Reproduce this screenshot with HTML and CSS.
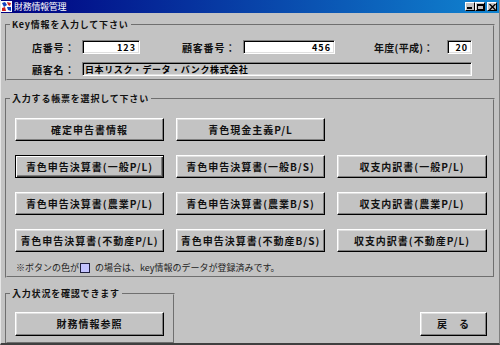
FILE: index.html
```html
<!DOCTYPE html>
<html lang="ja">
<head>
  <meta charset="UTF-8" />
  <title>財務情報管理</title>
  <link rel="stylesheet" href="styles.css">
</head>
<body>

<div class="window">
  <div class="titlebar">
    <svg class="app-icon" width="11" height="11" viewBox="0 0 11 11">
      <rect x="0" y="0" width="11" height="11" fill="#ffffff"/>
      <path d="M1 2 L4 1 L6 4 L3 6 Z" fill="#1040c0"/>
      <path d="M6 1 L10 2 L9 5 L7 4 Z" fill="#d02020"/>
      <path d="M1 7 L4 6 L5 10 L1 10 Z" fill="#d02020"/>
      <path d="M6 6 L10 6 L10 10 L7 9 Z" fill="#1040c0"/>
    </svg>
    <span class="title">財務情報管理</span>
    <div class="caption-buttons">
      <span class="cap-btn">
        <svg width="6" height="5" viewBox="0 0 6 5"><rect x="0" y="3" width="5" height="2" fill="#000"/></svg>
      </span>
      <span class="cap-btn">
        <svg width="7" height="6" viewBox="0 0 7 6"><rect x="0.5" y="0.5" width="6" height="5" fill="none" stroke="#000"/><rect x="0" y="0" width="7" height="2" fill="#000"/></svg>
      </span>
      <span class="cap-btn cap-close">
        <svg width="7" height="6" viewBox="0 0 7 6"><path d="M0.5 0 L6.5 6 M6.5 0 L0.5 6" stroke="#000" stroke-width="1.4"/></svg>
      </span>
    </div>
  </div>

  <div class="client">
    <fieldset class="group group-key">
      <legend>Key情報を入力して下さい</legend>
      <div class="key-row">
        <label class="lbl lbl-1">店番号：</label>
        <input class="field num w-shop" type="text" value="123" readonly>
        <label class="lbl lbl-2">顧客番号：</label>
        <input class="field num w-cust" type="text" value="456" readonly>
        <label class="lbl lbl-3">年度(平成)：</label>
        <input class="field num w-year" type="text" value="20" readonly>
      </div>
      <div class="key-row">
        <label class="lbl lbl-1">顧客名：</label>
        <input class="field name w-name" type="text" value="日本リスク・データ・バンク株式会社" disabled>
      </div>
    </fieldset>

    <fieldset class="group group-forms">
      <legend>入力する帳票を選択して下さい</legend>
      <div class="form-grid">
        <button class="btn">確定申告書情報</button>
        <button class="btn">青色現金主義P/L</button>
        <span></span>
        <button class="btn btn-default">青色申告決算書(一般P/L)</button>
        <button class="btn">青色申告決算書(一般B/S)</button>
        <button class="btn">収支内訳書(一般P/L)</button>
        <button class="btn">青色申告決算書(農業P/L)</button>
        <button class="btn">青色申告決算書(農業B/S)</button>
        <button class="btn">収支内訳書(農業P/L)</button>
        <button class="btn">青色申告決算書(不動産P/L)</button>
        <button class="btn">青色申告決算書(不動産B/S)</button>
        <button class="btn">収支内訳書(不動産P/L)</button>
      </div>
      <p class="note">※ボタンの色が<span class="swatch"></span> の場合は、key情報のデータが登録済みです。</p>
    </fieldset>

    <div class="bottom-row">
      <fieldset class="group group-status">
        <legend>入力状況を確認できます</legend>
        <button class="btn btn-wide">財務情報参照</button>
      </fieldset>
      <button class="btn btn-back">戻　る</button>
    </div>
  </div>
</div>

</body>
</html>
```

FILE: styles.css
```css
* {
  box-sizing: border-box;
}

body {
  margin: 0;
  background-color: #c3c3c3;
  color: #111;
  font-family: "Noto Sans CJK JP", "Noto Sans", sans-serif;
}

.window {
  width: 500px;
  height: 345px;
  background-color: #c3c3c3;
  display: flex;
  flex-direction: column;
  border-left: 1px solid #e6e6e6;
  border-right: 1px solid #808080;
  border-bottom: 2px solid #404040;
  overflow: hidden;
}

/* title bar */
.titlebar {
  height: 13px;
  flex-shrink: 0;
  background: linear-gradient(to right, #000080, #1084d0);
  display: flex;
  align-items: center;
  padding: 0 2px 0 0;
  color: #fff;
}

.app-icon {
  margin-right: 2px;
}

.title {
  font-size: 9px;
  line-height: 13px;
  letter-spacing: -0.3px;
}

.caption-buttons {
  margin-left: auto;
  display: flex;
}

.cap-btn {
  width: 10px;
  height: 9px;
  background-color: #c3c3c3;
  border: 1px solid;
  border-color: #fff #000 #000 #fff;
  display: flex;
  align-items: center;
  justify-content: center;
}

.cap-close {
  margin-left: 2px;
}

/* client area */
.client {
  flex: 1;
  padding: 6px 4px 0 4px;
  display: flex;
  flex-direction: column;
}

.group {
  margin: 0;
  padding: 0;
  border: 2px groove #c3c3c3;
  min-width: 0;
}

.group legend {
  margin-left: 3px;
  padding: 0 2px;
  font-size: 9px;
  font-weight: bold;
  line-height: 12px;
  letter-spacing: 0.8px;
}

/* key group */
.group-key {
  padding: 9px 0 3px 0;
  display: flex;
  flex-direction: column;
  gap: 8px;
}

.key-row {
  display: flex;
  align-items: center;
  height: 14px;
  margin-left: 25px;
}

.lbl {
  font-size: 10px;
  font-weight: bold;
  letter-spacing: 0.8px;
  white-space: nowrap;
}

.lbl-1 { width: 50px; }
.lbl-2 { width: 61px; margin-left: 42px; }
.lbl-3 { width: 73px; margin-left: 39px; letter-spacing: 0.3px; }

.field {
  height: 14px;
  margin: 0;
  padding: 0 3px;
  border: 1px solid;
  border-color: #808080 #fff #fff #808080;
  box-shadow: inset 1px 1px 0 #000, inset -1px -1px 0 #dfdfdf;
  background-color: #fff;
  color: #000;
  font-family: "Noto Sans CJK JP", sans-serif;
  font-size: 9px;
  font-weight: bold;
  outline: none;
}

.num {
  text-align: right;
  letter-spacing: 1px;
}

.name {
  background-color: #c3c3c3;
  letter-spacing: 0.6px;
  padding-left: 2px;
}

.w-shop { width: 58px; }
.w-cust { width: 92px; }
.w-year { width: 25px; }
.w-name { width: 390px; }

/* forms group */
.group-forms {
  margin-top: 12px;
  padding: 13px 0 2px 0;
}

.form-grid {
  margin-left: 8px;
  display: grid;
  grid-template-columns: 149px 149px 150px;
  grid-auto-rows: 23px;
  column-gap: 12px;
  row-gap: 14px;
}

.btn {
  margin: 0;
  padding: 0;
  height: 23px;
  background-color: #c3c3c3;
  border: 1px solid;
  border-color: #fff #000 #000 #fff;
  box-shadow: inset -1px -1px 0 #808080, inset 1px 1px 0 #dfdfdf;
  color: #111;
  font-family: "Noto Sans CJK JP", sans-serif;
  font-size: 10px;
  font-weight: bold;
  letter-spacing: 1px;
  white-space: nowrap;
}

.btn-default {
  border-color: #000;
  box-shadow: inset 1px 1px 0 #fff, inset -1px -1px 0 #404040, inset -2px -2px 0 #808080;
}

.note {
  margin: 10px 0 0 9px;
  font-size: 9px;
  line-height: 12px;
  color: #222;
  display: flex;
  align-items: center;
  white-space: nowrap;
}

.swatch {
  display: inline-block;
  width: 10px;
  height: 10px;
  margin: 0 5px 0 1px;
  background-color: #c4c4ff;
  border: 1px solid #202040;
}

/* bottom row */
.bottom-row {
  margin-top: 10px;
  display: flex;
  align-items: flex-end;
}

.group-status {
  width: 170px;
  padding: 9px 0 6px 0;
}

.btn-wide {
  width: 149px;
  height: 24px;
  margin-left: 8px;
}

.btn-back {
  width: 67px;
  height: 24px;
  margin-left: auto;
  margin-right: 8px;
  margin-bottom: 8px;
}
```
